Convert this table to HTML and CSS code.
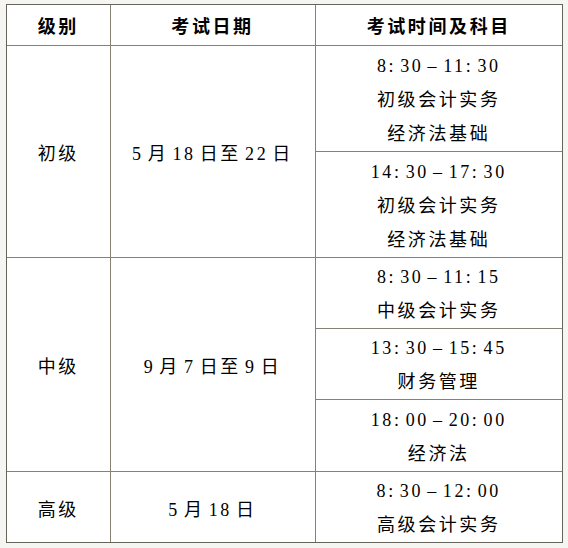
FILE: index.html
```html
<!DOCTYPE html>
<html lang="zh-CN">
<head>
<meta charset="utf-8">
<title>考试安排</title>
<link rel="stylesheet" href="styles.css">
</head>
<body>
<div class="frame">
<table class="exam">
<colgroup>
<col class="c1">
<col class="c2">
<col class="c3">
</colgroup>
<thead>
<tr><th>级别</th><th>考试日期</th><th>考试时间及科目</th></tr>
</thead>
<tbody>
<tr>
<td class="span" rowspan="2">初级</td>
<td class="span" rowspan="2">5 月 18 日至 22 日</td>
<td class="l3">8: 30 – 11: 30<br>初级会计实务<br>经济法基础</td>
</tr>
<tr>
<td class="l3">14: 30 – 17: 30<br>初级会计实务<br>经济法基础</td>
</tr>
<tr>
<td class="span" rowspan="3">中级</td>
<td class="span" rowspan="3">9 月 7 日至 9 日</td>
<td class="l2">8: 30 – 11: 15<br>中级会计实务</td>
</tr>
<tr>
<td class="l2">13: 30 – 15: 45<br>财务管理</td>
</tr>
<tr>
<td class="l2x">18: 00 – 20: 00<br>经济法</td>
</tr>
<tr>
<td class="span first">高级</td>
<td class="span">5 月 18 日</td>
<td class="l2">8: 30 – 12: 00<br>高级会计实务</td>
</tr>
</tbody>
</table>
</div>
</body>
</html>
```
FILE: styles.css
```css
html, body {
  margin: 0;
  padding: 0;
  background: #f5f5f2;
}
body {
  padding: 4px 5px 0 6px;
}
.frame {
  width: 555px;
  border: 1px solid #66635a;
  background: #ffffff;
}
.exam {
  width: 555px;
  table-layout: fixed;
  border-collapse: collapse;
  font-family: "Liberation Serif", "Noto Sans CJK SC", serif;
  font-size: 18px;
  letter-spacing: 2.6px;
  word-spacing: -3px;
  color: #000;
}
.c1 { width: 103px; }
.c2 { width: 205px; }
.c3 { width: 247px; }
.exam th,
.exam td {
  border: 1px solid #858274;
  padding: 0;
  text-align: center;
  vertical-align: middle;
  line-height: 34px;
}
.exam th {
  font-weight: bold;
  line-height: 36px;
  padding-top: 4px;
  border-top: none;
}
.exam td.l3 { padding-top: 3px; }
.exam td.l2 { padding-top: 2px; }
.exam td.l2x { padding-top: 3px; }
.exam td.span { padding-top: 5px; }
.exam th:first-child,
.exam td[rowspan]:first-child,
.exam td.first { border-left: none; }
.exam th:last-child,
.exam td:last-child { border-right: none; }
.exam tbody tr:last-child td { border-bottom: none; }
```
